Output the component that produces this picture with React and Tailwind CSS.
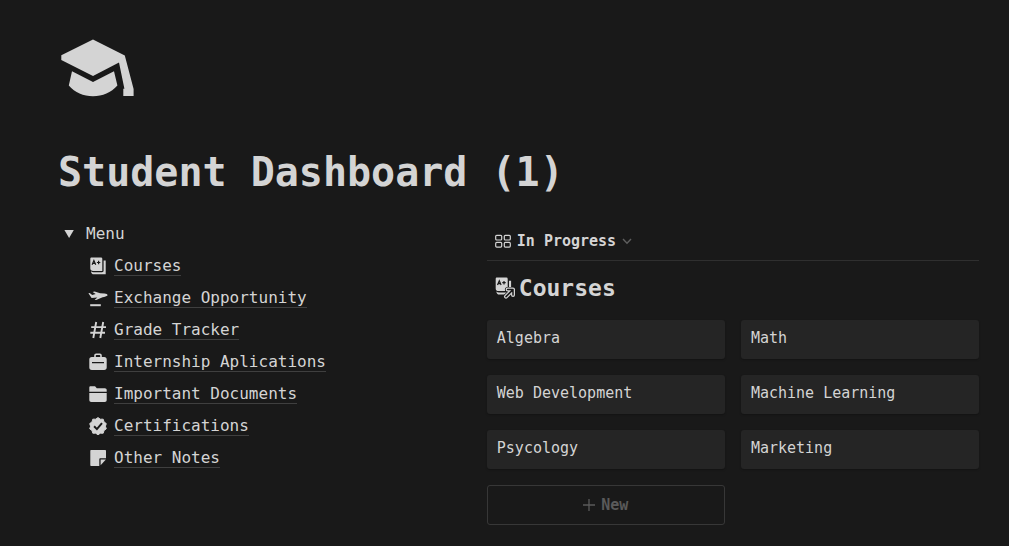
import { useState } from "react";

const MENU = [
  { label: "Courses", icon: BookIcon },
  { label: "Exchange Opportunity", icon: PlaneIcon },
  { label: "Grade Tracker", icon: HashIcon },
  { label: "Internship Aplications", icon: BriefcaseIcon },
  { label: "Important Documents", icon: FolderIcon },
  { label: "Certifications", icon: BadgeIcon },
  { label: "Other Notes", icon: NoteIcon },
];

const COURSES = ["Algebra", "Math", "Web Development", "Machine Learning", "Psycology", "Marketing"];

const Icon = ({ children, className = "size-5" }) => (
  <svg viewBox="0 0 20 20" fill="currentColor" aria-hidden="true" className={`shrink-0 ${className}`}>
    {children}
  </svg>
);

function CapIcon() {
  return (
    <svg viewBox="0 0 78 78" fill="currentColor" aria-hidden="true" className="size-[78px]">
      <path d="M35 10.5 66.8 26.4 75.6 60V67H65.3V59.7H66.4L61 33.6 35 47 3.3 31V26.3Z" />
      <path d="M14 42.2 35 53 56 42.2 59.4 56.6C53 63.8 44.6 67.2 35 67.2S17 63.8 10.8 56.6Z" />
    </svg>
  );
}

function BookShape() {
  return (
    <>
      <path d="M3.6 1.4H13a1.3 1.3 0 0 1 1.3 1.3v12.2H5.2c-1.7 0-2.9-.8-2.9-2.4V2.7c0-.8.5-1.3 1.3-1.3Z" />
      <path d="M3 15.2c.6.7 1.5 1 2.6 1H14c1.1 0 1.6-.5 1.6-1.6V4.6h2.1v13.7H6c-1.8 0-3-1.2-3-3.1Z" />
      <path d="m4.1 8.7 1.8-4.2 1.8 4.2M4.8 7.4h2.3M8.9 6.5h3.4M10.6 4.8v3.4" fill="none" stroke="#191919" strokeWidth="1.2" />
    </>
  );
}

function BookIcon() {
  return (
    <Icon>
      <BookShape />
    </Icon>
  );
}

function PlaneIcon() {
  return (
    <Icon>
      <path d="M.4 5.3 1.7 4.9 4.2 6.9 7.7 6 4.6 3.9 6.6 3.4 12.2 5.3 16.4 5.4C18.4 5.5 19.6 6.3 19.7 7.2 18.6 8.4 16.6 8.8 14.6 9.2L8.2 11.9 6.6 12.1 9.3 9.4 3.6 10 .4 5.3Z" />
      <path d="M2.2 16.2H12.8V18.2H2.2Z" />
    </Icon>
  );
}

function HashIcon() {
  return (
    <Icon>
      <path d="M8.2 2 5.3 18M15.2 2 12.3 18M3.2 7.1H18M2.3 12.8H17" fill="none" stroke="currentColor" strokeWidth="1.9" />
    </Icon>
  );
}

function BriefcaseIcon() {
  return (
    <Icon>
      <path
        fillRule="evenodd"
        d="M6.2 4.9V3.4c0-1.2.8-2 2-2h3.6c1.2 0 2 .8 2 2v1.5h2.4c1.6 0 2.5.9 2.5 2.5v8.1c0 1.6-.9 2.5-2.5 2.5H3.8c-1.6 0-2.5-.9-2.5-2.5V7.4c0-1.6.9-2.5 2.5-2.5ZM7.8 4.9h4.4V3.5c0-.4-.2-.6-.6-.6H8.4c-.4 0-.6.2-.6.6ZM4 10v1.3h12V10Z"
      />
    </Icon>
  );
}

function FolderIcon() {
  return (
    <Icon>
      <path d="M1.3 7.8V3.7c0-.9.5-1.4 1.4-1.4h3.7c.5 0 .8.1 1.1.4l1.3 1.5h8c1.2 0 1.9.7 1.9 1.9v1.7Z" />
      <path d="M1.3 9.1H18.7V16c0 1.3-.7 2-2 2H3.3c-1.3 0-2-.7-2-2Z" />
    </Icon>
  );
}

function BadgeIcon() {
  return (
    <Icon>
      <path
        d="M10 1.6 12.3 3.2 15.2 3.2 16 5.9 18.3 7.6 17.4 10.2 18.3 12.8 16 14.5 15.2 17.2 12.3 17.2 10 18.8 7.7 17.2 4.8 17.2 4 14.5 1.7 12.8 2.6 10.2 1.7 7.6 4 5.9 4.8 3.2 7.7 3.2Z"
        stroke="currentColor"
        strokeLinejoin="round"
      />
      <path d="M6.1 10.3 8.9 13.1 14 7.2" fill="none" stroke="#191919" strokeWidth="2" />
    </Icon>
  );
}

function NoteIcon() {
  return (
    <Icon>
      <path d="M3.3 2H17c.6 0 1 .4 1 1v7.3h-5.6c-.7 0-1.1.4-1.1 1.1V18h-8c-.6 0-1-.4-1-1V3c0-.6.4-1 1-1Z" />
      <path d="M12.6 11.6H17.9L12.6 17.2Z" />
    </Icon>
  );
}

function LinkedBookIcon() {
  return (
    <svg viewBox="0 0 22 24" fill="currentColor" aria-hidden="true" className="h-6 w-[22px] shrink-0">
      <g transform="translate(-1.6 .2)">
        <BookShape />
      </g>
      <g fill="none" strokeLinecap="round" strokeLinejoin="round">
        <path d="M12.6 13.6H18V19M18 13.6 11 20.6" stroke="#191919" strokeWidth="5.4" />
        <path d="M12.6 13.6H18V19M18 13.6 11 20.6" stroke="currentColor" strokeWidth="4" />
        <path d="M12.6 13.6H18V19M18 13.6 11 20.6" stroke="#191919" strokeWidth="1.5" />
      </g>
    </svg>
  );
}

export default function App() {
  const [open, setOpen] = useState(true);

  return (
    <div className="min-h-screen bg-[#191919] pt-[29px] pr-[30px] pb-5 pl-[58px] font-['DejaVu_Sans_Mono','Liberation_Mono',monospace] text-[#d4d4d4]">
      <CapIcon />
      <h1 className="mt-10 text-[40px] leading-[50px] font-bold">Student Dashboard (1)</h1>

      <main className="mt-[21px] flex items-start gap-[46px]">
        <nav className="min-w-0 flex-[7]">
          <button type="button" aria-expanded={open} onClick={() => setOpen(!open)} className="flex h-8 items-center gap-3 pl-[6px]">
            <svg viewBox="0 0 10 10" fill="currentColor" aria-hidden="true" className={`size-[10px] ${open ? "" : "-rotate-90"}`}>
              <path d="M.4 1H9.8L5.1 9Z" />
            </svg>
            Menu
          </button>
          {open && (
            <ul className="pl-[30px]">
              {MENU.map(({ label, icon: ItemIcon }) => (
                <li key={label} className="flex h-8 items-center gap-[6px]">
                  <ItemIcon />
                  <a href="#" className="border-b border-[#3f3f3f] leading-[19px]">
                    {label}
                  </a>
                </li>
              ))}
            </ul>
          )}
        </nav>

        <section className="min-w-0 flex-[9]">
          <div className="flex h-[43px] items-center border-b border-[#2f2f2f] pt-1 pl-2">
            <button type="button" className="flex items-center gap-[6px] text-[15px] leading-5 font-bold">
              <svg viewBox="0 0 16 14" fill="none" stroke="currentColor" strokeWidth="1.2" aria-hidden="true" className="h-[14px] w-4">
                <rect x=".7" y="1.3" width="6" height="4.7" rx="1" />
                <rect x="9.3" y="1.3" width="6" height="4.7" rx="1" />
                <rect x=".7" y="8.4" width="6" height="4.7" rx="1" />
                <rect x="9.3" y="8.4" width="6" height="4.7" rx="1" />
              </svg>
              In Progress
              <svg viewBox="0 0 10 10" fill="none" stroke="#5f5f5f" strokeWidth="1.4" aria-hidden="true" className="size-[10px]">
                <path d="M1 3 5 7.2 9 3" />
              </svg>
            </button>
          </div>

          <h2 className="flex h-[59px] items-center gap-[2px] pb-[5px] pl-2 text-[23px] leading-8 font-bold">
            <LinkedBookIcon />
            Courses
          </h2>

          <div className="grid grid-cols-2 gap-4">
            {COURSES.map((name) => (
              <a
                key={name}
                href="#"
                className="h-[39px] truncate rounded-[3px] bg-[#252525] px-[10px] pt-2 text-[15px] leading-5 shadow-[0_1px_2px_rgba(0,0,0,0.25)]"
              >
                {name}
              </a>
            ))}
            <button
              type="button"
              className="flex h-10 items-center justify-center gap-[6px] rounded-[3px] border border-[#373737] text-[15px] font-bold text-[#5a5a5a]"
            >
              <svg viewBox="0 0 12 12" fill="none" stroke="currentColor" strokeWidth="1.3" aria-hidden="true" className="size-3">
                <path d="M6 0V12M0 6H12" />
              </svg>
              New
            </button>
          </div>
        </section>
      </main>
    </div>
  );
}
